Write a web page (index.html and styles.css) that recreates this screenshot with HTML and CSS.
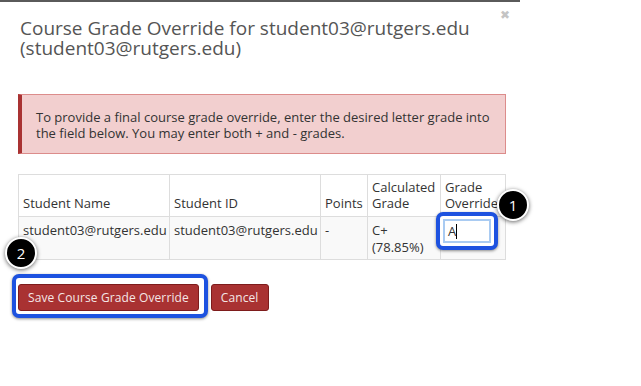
FILE: index.html
```html
<!DOCTYPE html>
<html lang="en">
<head>
    <meta charset="UTF-8">
    <title>Course Grade Override</title>
    <link rel="stylesheet" href="styles.css">
</head>
<body>
<div class="dialog">
    <span class="close">&#x2716;</span>
    <h2 class="title">Course Grade Override for student03@rutgers.edu (student03@rutgers.edu)</h2>

    <!-- Hinweis -->
    <div class="alert">
        To provide a final course grade override, enter the desired letter grade into the field below. You may enter both + and - grades.
    </div>

    <!-- Tabelle -->
    <table class="grades">
        <colgroup>
            <col class="c-name">
            <col class="c-id">
            <col class="c-points">
            <col class="c-calc">
            <col>
        </colgroup>
        <thead>
            <tr>
                <th>Student Name</th>
                <th>Student ID</th>
                <th>Points</th>
                <th>Calculated Grade</th>
                <th>Grade Override</th>
            </tr>
        </thead>
        <tbody>
            <tr>
                <td>student03@rutgers.edu</td>
                <td>student03@rutgers.edu</td>
                <td>-</td>
                <td>C+<br>(78.85%)</td>
                <td class="override-cell">
                    <span class="ring ring-input"><span class="grade-input">A<span class="caret"></span></span></span>
                    <span class="badge badge-one">1</span>
                </td>
            </tr>
        </tbody>
    </table>

    <div class="actions">
        <span class="badge badge-two">2</span>
        <span class="ring ring-button"><button class="btn">Save Course Grade Override</button></span>
        <button class="btn btn-cancel">Cancel</button>
    </div>
</div>
</body>
</html>
```

FILE: styles.css
```css
body {
    margin: 0;
    padding: 0;
    background: #fff;
    font-family: "Open Sans", "Liberation Sans", sans-serif;
    color: #333;
}

.dialog {
    position: relative;
    width: 520px;
    border-top: 2px solid #5a5a5a;
    padding: 16px 14px 40px 18px;
    box-sizing: border-box;
}

.close {
    position: absolute;
    top: 4px;
    right: 10px;
    font-size: 12px;
    color: #c4c4c4;
}

.title {
    margin: 0 0 0 2px;
    font-size: 19px;
    font-weight: 400;
    line-height: 20px;
    color: #555;
}

.alert {
    margin-top: 36px;
    padding: 14px 12px 12px 14px;
    background: #f2cfcf;
    border: 1px solid #dc8c8b;
    border-left: 4px solid #a93232;
    font-size: 13px;
    line-height: 16px;
    color: #333;
}

.grades {
    width: 100%;
    margin-top: 20px;
    border-collapse: collapse;
    table-layout: fixed;
    font-size: 13px;
    line-height: 16px;
}

.c-name { width: 151px; }
.c-id { width: 151px; }
.c-points { width: 47px; }
.c-calc { width: 73px; }

.grades th, .grades td {
    border: 1px solid #ddd;
    padding: 4px 4px 5px;
    text-align: left;
    font-weight: 400;
    vertical-align: bottom;
    white-space: nowrap;
}

.grades th:nth-child(4), .grades th:nth-child(5) {
    white-space: normal;
}

.grades td {
    vertical-align: top;
    background: #f9f9f9;
    padding: 5px 4px 3px;
    line-height: 17px;
}

.override-cell {
    position: relative;
}

.ring {
    display: block;
    border: 4px solid #1d52e0;
    border-radius: 7px;
    box-shadow: 0 1px 3px rgba(0, 0, 0, 0.45);
    background: #fff;
}

.ring-input {
    width: 48px;
    padding: 3px;
    margin: -10px 0 0 -9px;
}

.grade-input {
    display: block;
    width: 48px;
    height: 24px;
    border: 2px solid #a9cbf2;
    font-size: 13px;
    line-height: 20px;
    padding-left: 3px;
    box-sizing: border-box;
    color: #333;
}

.caret {
    display: inline-block;
    width: 1px;
    height: 15px;
    background: #000;
    vertical-align: -3px;
}

.badge {
    position: absolute;
    width: 28px;
    height: 28px;
    border-radius: 50%;
    background: #000;
    border: 2px solid #fff;
    box-shadow: 0 1px 4px rgba(0, 0, 0, 0.6);
    color: #fff;
    font-size: 15px;
    line-height: 28px;
    text-align: center;
}

.badge-one {
    left: 56px;
    top: -28px;
}

.badge-two {
    left: -7px;
    top: -37px;
}

.actions {
    position: relative;
    margin-top: 14px;
    margin-left: -6px;
    display: flex;
    align-items: flex-start;
    gap: 3px;
}

.ring-button {
    padding: 6px 5px 3px 2px;
}

.btn {
    display: block;
    background: #a93232;
    color: #f4e6e6;
    border: 1px solid #7e1c1c;
    border-radius: 3px;
    font-family: "Open Sans", "Liberation Sans", sans-serif;
    font-size: 12px;
    letter-spacing: 0.1px;
    padding: 6px 9px 5px;
    line-height: 14px;
    cursor: pointer;
}

.btn-cancel {
    margin-top: 10px;
}
```
